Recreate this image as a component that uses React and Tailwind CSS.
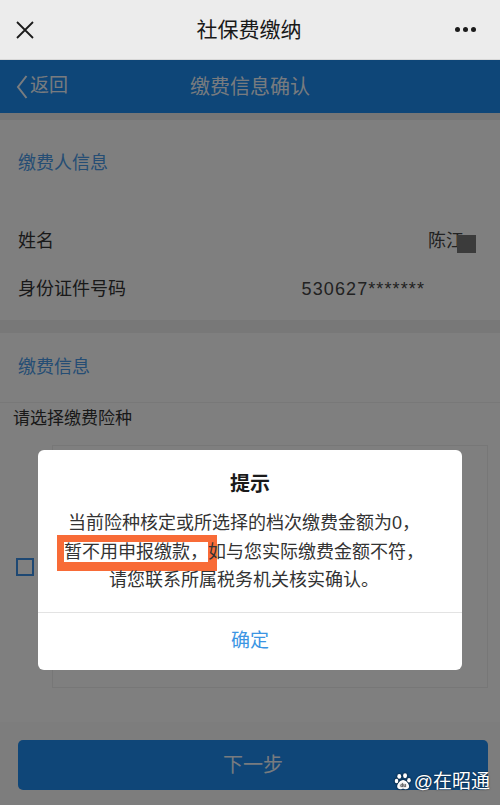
// App.jsx — 社保费缴纳 / 缴费信息确认 with the "提示" dialog open

const font = "font-['Liberation_Sans','Noto_Sans_CJK_SC',sans-serif]"

function PawIcon() {
  return (
    <svg width="19" height="19" viewBox="0 0 18 18" className="drop-shadow-[0_0_1px_rgba(0,0,0,0.8)]">
      <ellipse cx="5" cy="4.2" rx="1.9" ry="2.3" fill="white" />
      <ellipse cx="10.5" cy="3.6" rx="1.9" ry="2.3" fill="white" />
      <ellipse cx="2.4" cy="8.6" rx="1.7" ry="2.1" fill="white" />
      <ellipse cx="14.2" cy="7.8" rx="1.7" ry="2.1" fill="white" />
      <path d="M8.6 7.6c-2.6 0-5.6 3.6-5.6 6.2 0 1.9 1.5 2.6 3 2.6 1.2 0 1.8-.5 2.6-.5s1.4.5 2.7.5c1.5 0 3-.7 3-2.6 0-2.6-3.1-6.2-5.7-6.2z" fill="white" />
      <text x="8.7" y="14.6" fontSize="4.6" textAnchor="middle" fill="#555" fontFamily="Liberation Sans, sans-serif" fontWeight="700">du</text>
    </svg>
  )
}

export default function App() {
  return (
    <div className={`relative w-[500px] h-[805px] overflow-hidden bg-white ${font}`}>

      {/* ── WeChat top bar ─────────────────────────────── */}
      <div className="h-[60px] bg-[#ececec] flex items-center px-[15px] border-b border-[#d8d8d8]">
        <svg width="20" height="20" viewBox="0 0 20 20" className="shrink-0">
          <path d="M2 2L18 18M18 2L2 18" stroke="#1b1b1b" strokeWidth="1.8" />
        </svg>
        <div className="flex-1 text-center text-[21px] text-[#191919] pl-[8px]">社保费缴纳</div>
        <div className="flex gap-[3px] pr-[9px]">
          <span className="w-[5px] h-[5px] rounded-full bg-[#1b1b1b]" />
          <span className="w-[5px] h-[5px] rounded-full bg-[#1b1b1b]" />
          <span className="w-[5px] h-[5px] rounded-full bg-[#1b1b1b]" />
        </div>
      </div>

      {/* ── Page header ────────────────────────────────── */}
      <div className="relative h-[53px] bg-[#1d8cf0] flex items-center justify-center">
        <div className="absolute left-[16px] top-0 h-full flex items-center text-white/95 text-[19px]">
          <svg width="12" height="26" viewBox="0 0 12 26" className="mr-[2px]">
            <path d="M10.5 2L2 13L10.5 24" stroke="currentColor" strokeWidth="2" fill="none" />
          </svg>
          返回
        </div>
        <div className="text-white/95 text-[20px]">缴费信息确认</div>
      </div>
      <div className="h-[7px] bg-[#ececec]" />

      {/* ── 缴费人信息 ─────────────────────────────────── */}
      <div className="h-[86px] flex items-center px-[18px] text-[18px] text-[#4b9be8]">缴费人信息</div>
      <div className="h-[11px]" />
      <div className="h-[48px] flex items-center px-[18px] text-[18px] text-[#333]">
        <span>姓名</span>
        <span className="relative ml-auto mr-[18px] text-[#444]">
          陈江
          <span className="absolute left-[29px] top-[7px] w-[19px] h-[18px] bg-[#767676]" />
        </span>
      </div>
      <div className="h-[48px] flex items-center px-[18px] text-[18px] text-[#333]">
        <span>身份证件号码</span>
        <span className="ml-auto mr-[57px] text-[#444] tracking-[1.1px]">530627*******</span>
      </div>
      <div className="h-[7px]" />
      <div className="h-[13px] bg-[#f0f0f0]" />

      {/* ── 缴费信息 ───────────────────────────────────── */}
      <div className="h-[70px] flex items-center px-[18px] text-[18px] text-[#4b9be8] border-b border-[#f0f0f0]">缴费信息</div>
      <div className="h-[32px] flex items-center px-[13px] text-[17px] text-[#333]">请选择缴费险种</div>

      <div className="flex items-center h-[243px] mt-[10px]">
        <div className="w-[52px] flex justify-center pr-[2px]">
          <span className="w-[18px] h-[18px] border-2 border-[#3d90e6]" />
        </div>
        <div className="flex-1 h-full mr-[12px] border border-[#efefef]" />
      </div>

      {/* ── Bottom action ──────────────────────────────── */}
      <div className="mt-[34px] h-[83px] bg-[#fbfbfb] px-[18px] pt-[18px] pr-[12px]">
        <div className="h-[50px] rounded-[5px] bg-[#1e8cf0] flex items-center justify-center text-[20px] text-white/95">下一步</div>
      </div>

      {/* ── Dim overlay ────────────────────────────────── */}
      <div className="absolute left-0 right-0 top-[60px] bottom-0 bg-black/50" />

      {/* ── Dialog ─────────────────────────────────────── */}
      <div className="absolute left-[38px] top-[450px] w-[424px] h-[220px] bg-white rounded-[6px] flex flex-col">
        <div className="pt-[22px] leading-[24px] text-center text-[20px] font-bold text-[#1a1a1a]">提示</div>
        <div className="mt-[13px] pr-[12px] text-center text-[18px] leading-[28.5px] text-[#333]">
          <div>当前险种核定或所选择的档次缴费金额为0，</div>
          <div>
            <span className="bg-white shadow-[1px_1px_0_8px_#f86b37]">暂不用申报缴款，</span>如与您实际缴费金额不符，
          </div>
          <div>请您联系所属税务机关核实确认。</div>
        </div>
        <div className="mt-[17px] border-t border-[#e3e3e3] flex-1 flex items-center justify-center text-[19px] text-[#3b95e3]">
          确定
        </div>
      </div>

      {/* ── Watermark ──────────────────────────────────── */}
      <div className="absolute right-[10px] bottom-[9px] flex items-center gap-[1px] text-white text-[19px] [text-shadow:0_0_2px_rgba(0,0,0,0.7)]">
        <PawIcon />
        <span>@在昭通</span>
      </div>
    </div>
  )
}
